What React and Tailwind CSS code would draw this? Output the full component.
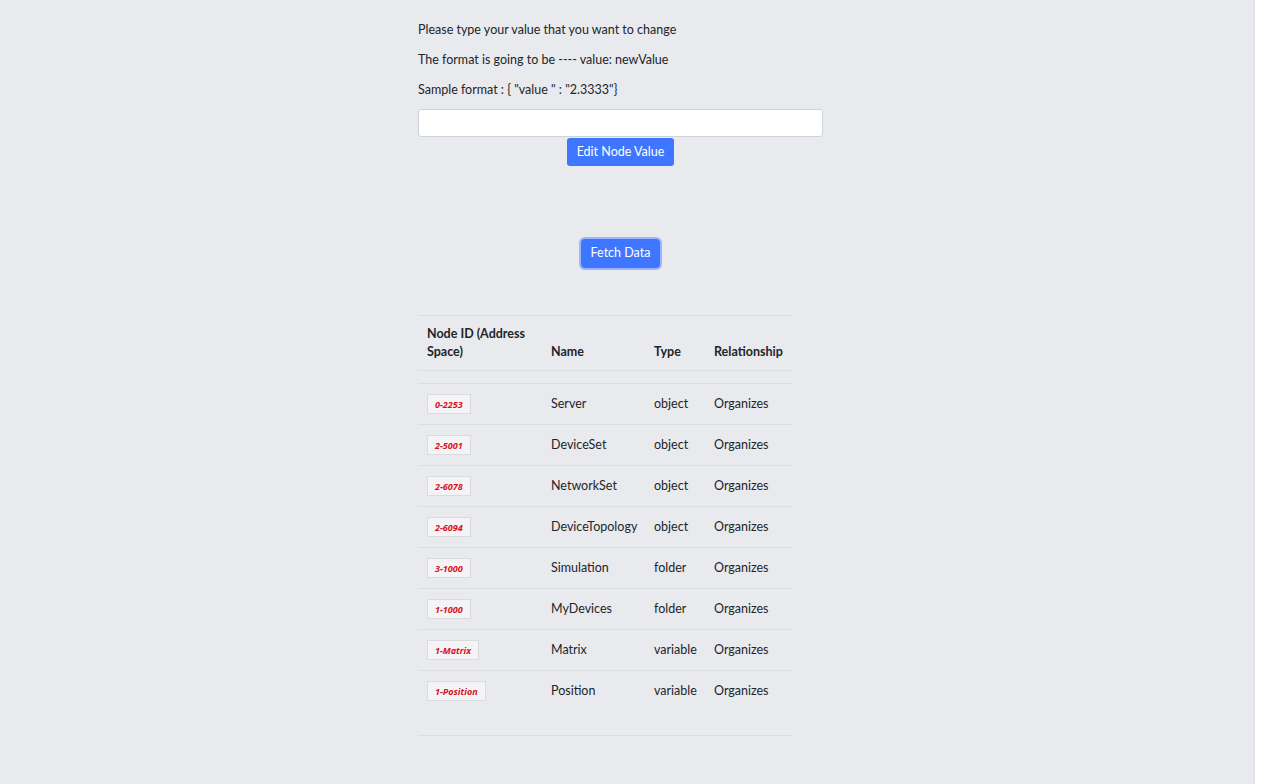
import React, { useState } from "react";

const rows = [
    { id: "0-2253", name: "Server", type: "object", rel: "Organizes" },
    { id: "2-5001", name: "DeviceSet", type: "object", rel: "Organizes" },
    { id: "2-6078", name: "NetworkSet", type: "object", rel: "Organizes" },
    { id: "2-6094", name: "DeviceTopology", type: "object", rel: "Organizes" },
    { id: "3-1000", name: "Simulation", type: "folder", rel: "Organizes" },
    { id: "1-1000", name: "MyDevices", type: "folder", rel: "Organizes" },
    { id: "1-Matrix", name: "Matrix", type: "variable", rel: "Organizes" },
    { id: "1-Position", name: "Position", type: "variable", rel: "Organizes" },
];

function App() {
    const [value, setValue] = useState("");

    return (
        <div className="flex min-h-[784px] bg-white font-['Lato',sans-serif] text-[12.5px] text-[#212529]">
            <div className="w-[1255px] bg-[#e9eaee] border-r-2 border-[#e2e3e7]">
                <div className="ml-[418px] w-[405px] pt-[20px]">
                    {/* edit section */}
                    <p className="leading-[20px] mb-[10px]">Please type your value that you want to change</p>
                    <p className="leading-[20px] mb-[10px]">The format is going to be ---- value: newValue</p>
                    <p className="leading-[20px] mb-[9px]">Sample format : {"{"} "value " : "2.3333"{"}"}</p>
                    <div className="flex flex-col items-center">
                        <input
                            className="w-full h-[28px] bg-white border border-[#ced4da] rounded-[3px] px-2 outline-none"
                            value={value}
                            onChange={(e) => setValue(e.target.value)}
                        />
                        <button className="mt-[1px] h-[28px] px-[10px] bg-[#3f76ff] text-white rounded-[3px] text-[12.5px]">
                            Edit Node Value
                        </button>
                    </div>

                    <div className="flex justify-center mt-[73px]">
                        <button className="h-[29px] px-[10px] bg-[#3f76ff] text-white rounded-[4px] text-[12.5px] ring-2 ring-[#9bb6ff]">
                            Fetch Data
                        </button>
                    </div>

                    {/* node table */}
                    <table className="mt-[47px] w-[374px] table-fixed border-collapse text-left">
                        <thead>
                            <tr className="border-t border-b border-[#dcdde1] align-bottom">
                                <th className="pl-[9px] pr-[20px] pt-[9px] pb-[9px] w-[133px] font-bold leading-[18px]">Node ID (Address Space)</th>
                                <th className="px-0 pb-[9px] w-[103px] font-bold leading-[18px]">Name</th>
                                <th className="px-0 pb-[9px] w-[60px] font-bold leading-[18px]">Type</th>
                                <th className="px-0 pb-[9px] font-bold leading-[18px]">Relationship</th>
                            </tr>
                        </thead>
                        <tbody>
                            <tr className="h-[13px] border-b border-[#dcdde1]">
                                <td colSpan={4}></td>
                            </tr>
                            {rows.map((row, index) => (
                                <tr
                                    key={index}
                                    className={index < rows.length - 1 ? "h-[41px] border-b border-[#dcdde1]" : "h-[41px]"}
                                >
                                    <td className="pl-[9px]">
                                        <code className="inline-block h-[20px] px-[7px] leading-[19px] bg-[#f4f4f6] border border-[#dadbdf] text-[#d8101c] text-[9px] italic font-bold font-['Open_Sans',sans-serif]">
                                            {row.id}
                                        </code>
                                    </td>
                                    <td>{row.name}</td>
                                    <td>{row.type}</td>
                                    <td>{row.rel}</td>
                                </tr>
                            ))}
                            <tr className="h-[24px] border-b border-[#dcdde1]">
                                <td colSpan={4}></td>
                            </tr>
                        </tbody>
                    </table>
                </div>
            </div>
        </div>
    );
}

export default App;
